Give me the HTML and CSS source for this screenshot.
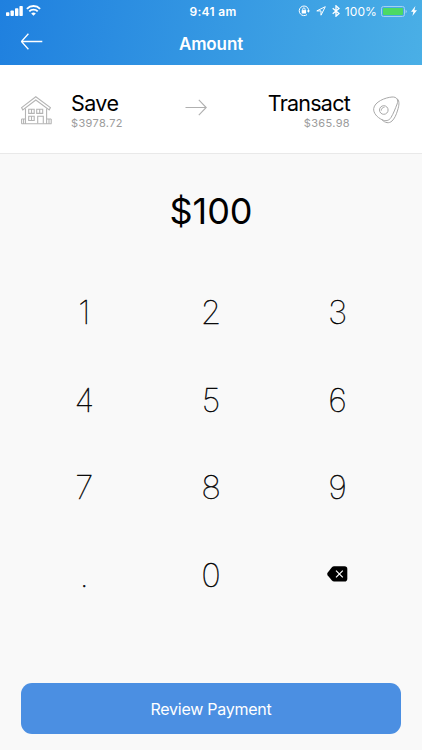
FILE: index.html
```html
<!DOCTYPE html>
<html lang="en">
<head>
  <meta charset="UTF-8" />
  <meta name="viewport" content="width=device-width, initial-scale=1.0"/>
  <title>Amount</title>
  <link rel="stylesheet" href="styles.css">
</head>
<body>

  <header>
    <div class="status">
      <div class="status-left">
        <svg width="17" height="10" viewBox="0 0 17 10" fill="#fff">
          <rect x="0" y="6.2" width="3.4" height="3.8" rx="0.8"/>
          <rect x="4.5" y="4.4" width="3.4" height="5.6" rx="0.8"/>
          <rect x="9" y="2.2" width="3.4" height="7.8" rx="0.8"/>
          <rect x="13.4" y="0" width="3.4" height="10" rx="0.8"/>
        </svg>
        <svg width="15" height="11" viewBox="0 0 15 11" fill="none" stroke="#fff" stroke-width="1.9">
          <path d="M0.9 3.8a9.3 9.3 0 0 1 13.2 0"/>
          <path d="M3.3 6.4a5.9 5.9 0 0 1 8.4 0"/>
          <path d="M7.5 10.8L5.2 8.5a3.3 3.3 0 0 1 4.6 0z" fill="#fff" stroke="none"/>
        </svg>
      </div>
      <span class="time">9:41 am</span>
      <div class="status-right">
        <svg class="lock" width="12" height="12" viewBox="0 0 12 12" fill="none" stroke="#fff">
          <path d="M9.4 2.4A4.8 4.8 0 1 0 9 9.6M9.4 2.4q1.4 1.6 1.2 4"/>
          <path d="M8.8 5.4h3.2L10.4 7.8z" fill="#fff" stroke="none"/>
          <rect x="3.7" y="5.1" width="4.4" height="3.4" fill="#fff" stroke="none"/>
          <path d="M4.7 5.4V4.1a1.2 1.2 0 0 1 2.4 0v1.3" stroke-width="0.9"/>
        </svg>
        <svg class="location" width="10" height="10" viewBox="0 0 10 10" fill="none" stroke="#fff" stroke-width="1">
          <path d="M9.3 0.7L0.8 4.9H5v4.3z"/>
        </svg>
        <svg class="bluetooth" width="8" height="12" viewBox="0 0 8 12" fill="none" stroke="#fff" stroke-width="1.3">
          <path d="M0.7 3.2L7 8.6L4 11.2V0.8L7 3.4L0.7 8.8"/>
        </svg>
        <span class="percent">100%</span>
        <svg class="battery" width="26" height="11" viewBox="0 0 26 11">
          <rect x="0.5" y="0.5" width="23" height="10" rx="2" fill="none" stroke="#a3d1f3"/>
          <rect x="2" y="2" width="20" height="7" rx="1" fill="#4cd964"/>
          <path d="M24.6 3.7q1.2.6 1.2 1.8t-1.2 1.8z" fill="#a3d1f3"/>
        </svg>
        <svg class="bolt" width="6" height="10" viewBox="0 0 6 10" fill="#fff">
          <path d="M4.4 0L0 5.8h2.4L1.4 10L6 4.2H3.4z"/>
        </svg>
      </div>
    </div>
    <div class="navbar">
      <a class="back" href="#">
        <svg width="22" height="17" viewBox="0 0 22 17" fill="none" stroke="#fff" stroke-width="1.3">
          <path d="M21.3 8.5H0.4M7.4 0.7L0.4 8.5L7.4 16.3"/>
        </svg>
      </a>
      <h1>Amount</h1>
    </div>
  </header>

  <section class="transfer">
    <svg class="house" width="31" height="29" viewBox="0 0 31 29" fill="none" stroke="#b4b4b4" stroke-width="1.1">
      <path d="M0.6 11.6L14.8 0.7L29.4 11.6L28.2 14L14.8 4L1.8 14z"/>
      <path d="M4.5 12.4v15.2M25.6 12.4v15.2M0.5 27.7h30M0.5 23h4M25.6 23h4.6M.6 23v4.7M30.2 23v4.7M2.6 23v4.7M28 23v4.7"/>
      <path d="M7.7 13.2h5.5v4.2H7.7zM10.5 13.2v4.2M15.7 13.2h6v4.2h-6zM18.7 13.2v4.2M7.7 20.3h5.5v4.2H7.7zM10.5 20.3v4.2M16.7 27.5v-7.2h5.6v7.2"/>
    </svg>
    <div class="account">
      <h2>Save</h2>
      <p>$3978.72</p>
    </div>
    <svg class="arrow" width="22" height="17" viewBox="0 0 22 17" fill="none" stroke="#b0b0b0" stroke-width="1.1">
      <path d="M0.5 8.5H21M13.8 0.8L21.2 8.5L13.8 16.2"/>
    </svg>
    <div class="account to">
      <h2>Transact</h2>
      <p>$365.98</p>
    </div>
    <svg class="steak" width="28" height="28" viewBox="0 0 28 28" fill="none" stroke="#a8a8a8">
      <path d="M.7 12.5C1.7 5.8 12 1.6 19 1C24 .7 25.7 4 24.1 8C22.3 12.5 20.5 17.5 18 21.5C16 24.8 12.7 25.5 9 23.7C4.3 21.5 .1 17 .7 12.5z"/>
      <path d="M24.2 2.8C26.9 5.5 26 9.5 24.7 14C23 19.5 21.5 22.5 19 25C16 27.8 12 27 9 23.7"/>
      <circle cx="10.8" cy="14" r="4.3"/>
      <path d="M8.3 14.6c0-2 1.3-3.3 3.2-3.4"/>
    </svg>
  </section>

  <main>
    <div class="amount" id="amount">$100</div>
    <div class="keypad">
      <button>1</button>
      <button>2</button>
      <button>3</button>
      <button>4</button>
      <button>5</button>
      <button>6</button>
      <button>7</button>
      <button>8</button>
      <button>9</button>
      <button>.</button>
      <button>0</button>
      <button class="delete" aria-label="Delete">
        <svg width="21" height="16" viewBox="0 0 21 16">
          <path d="M7.2 0.3H17.5Q20.3 0.3 20.3 3.1V12.7Q20.3 15.5 17.5 15.5H7.2Q5.8 15.5 4.7 14.3L0.6 9.2Q-.2 8 .6 6.8L4.7 1.5Q5.8 .3 7.2 .3z"/>
          <path d="M9 4.6L15.8 11.4M15.8 4.6L9 11.4" stroke="#fff" stroke-width="1.2"/>
        </svg>
      </button>
    </div>
  </main>

  <footer>
    <button class="review">Review Payment</button>
  </footer>

</body>
</html>
```
FILE: styles.css
```css
* { box-sizing: border-box; }
body {
  font-family: Inter, "Liberation Sans", sans-serif;
  margin: 0;
  height: 750px;
  display: flex;
  flex-direction: column;
  background: #f9f9f9;
  color: #000;
}
h1, h2, p { margin: 0; }
svg { display: block; flex-shrink: 0; }
button {
  border: none;
  padding: 0;
  background: none;
  color: #000;
  font-family: inherit;
  cursor: pointer;
}
header {
  height: 65px;
  background: linear-gradient(100deg, #1f80df, #4aafe6);
  color: #fff;
}
.status {
  height: 22px;
  display: grid;
  grid-template-columns: 1fr auto 1fr;
  align-items: center;
  padding: 0 5px 0 6px;
}
.status-left {
  display: flex;
  align-items: flex-end;
  gap: 3px;
  padding-bottom: 1px;
}
.time {
  padding-left: 3px;
  font-size: 12px;
  font-weight: 600;
  letter-spacing: 0.3px;
}
.status-right {
  display: flex;
  align-items: center;
  justify-content: flex-end;
}
.location { margin-left: 6px; }
.bluetooth { margin-left: 6px; }
.percent {
  margin-left: 5px;
  font-size: 12px;
  letter-spacing: 0.1px;
}
.battery { margin-left: 4px; }
.bolt { margin-left: 4px; }
.navbar {
  height: 43px;
  display: grid;
  grid-template-columns: 1fr auto 1fr;
  align-items: center;
  padding: 0 21px;
}
.back { padding-bottom: 4px; }
h1 {
  font-size: 17px;
  font-weight: 600;
  letter-spacing: -0.1px;
}
.transfer {
  height: 89px;
  display: flex;
  padding: 0 21px;
  background: #fff;
  border-bottom: 1px solid #e9e9e9;
}
.house { margin-top: 31px; }
.account {
  width: 90px;
  margin: 25px 0 0 19px;
}
.account h2 {
  font-size: 21.5px;
  font-weight: 400;
  line-height: 26px;
  letter-spacing: -0.6px;
}
.account p {
  font-size: 11px;
  line-height: 14px;
  letter-spacing: 0.35px;
  color: #9b9b9b;
}
.arrow { margin: 34px 0 0 24px; }
.to {
  width: auto;
  margin-left: auto;
  text-align: right;
}
.to h2 { letter-spacing: -0.75px; }
.steak { margin: 31px 0 0 23px; }
main { flex: 1; }
.amount {
  margin-top: 33px;
  font-size: 36px;
  line-height: 48px;
  text-align: center;
}
.keypad {
  margin: 33px 21px 0;
  display: grid;
  grid-template-columns: repeat(3, 1fr);
  grid-auto-rows: 87.8px;
}
.keypad button {
  display: flex;
  align-items: center;
  justify-content: center;
  font-size: 33px;
  font-weight: 100;
  -webkit-text-stroke: 0.4px #000;
}
.keypad .delete { padding-bottom: 3px; }
footer { padding: 0 21px 16px; }
.review {
  display: block;
  width: 100%;
  height: 51px;
  border-radius: 11px;
  background: #4b8fe2;
  color: #fff;
  font-size: 16px;
  letter-spacing: -0.25px;
}
```
